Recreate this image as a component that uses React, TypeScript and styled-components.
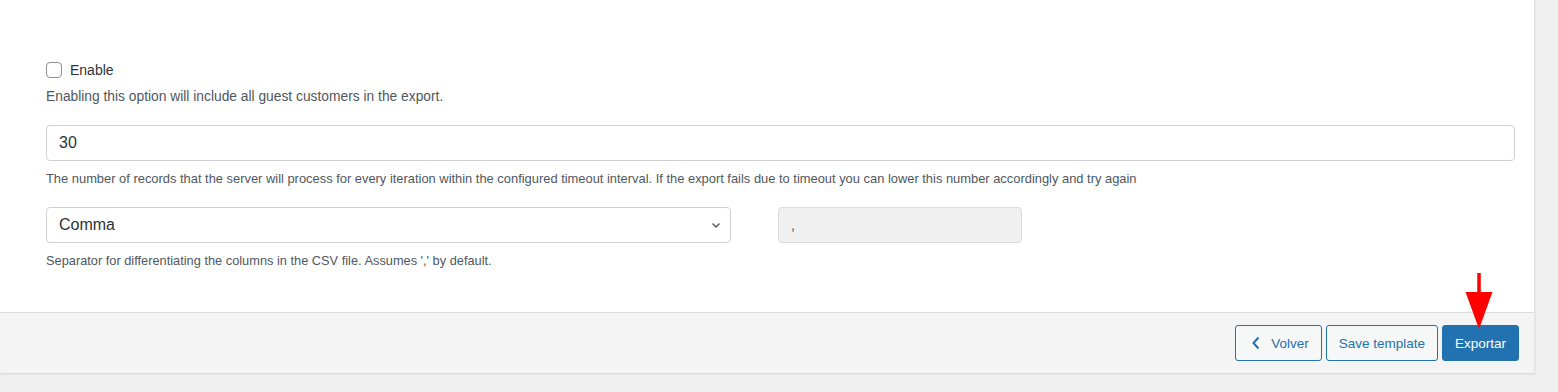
import React from "react";
import styled, { createGlobalStyle } from "styled-components";

const GlobalStyle = createGlobalStyle`
  html, body {
    margin: 0;
    padding: 0;
    background: #f0f0f1;
    font-family: "Liberation Sans", Arial, sans-serif;
    color: #1d2327;
  }
`;

const Page = styled.div`
  width: 1558px;
  height: 392px;
  overflow: hidden;
  background: #f0f0f1;
`;

const Panel = styled.section`
  width: 1534px;
  background: #fff;
  border-right: 1px solid #e2e2e2;
  box-shadow: 0 1px 2px rgba(0, 0, 0, 0.12);
  display: flex;
  flex-direction: column;
`;

const Body = styled.div`
  height: 312px;
  padding: 62px 19px 0 46px;
  box-sizing: border-box;
  display: flex;
  flex-direction: column;
`;

const CheckRow = styled.label`
  display: flex;
  align-items: center;
  gap: 8px;
  font-size: 14px;
  color: #2c3338;
  height: 16px;
`;

const Box = styled.span`
  width: 14px;
  height: 14px;
  border: 1px solid #8c8f94;
  border-radius: 4px;
  background: #fff;
`;

const Hint = styled.p<{ $gap: number; $size: number }>`
  margin: ${(p) => p.$gap}px 0 0;
  font-size: ${(p) => p.$size}px;
  line-height: 16px;
  color: #50575e;
`;

const Field = styled.div<{ $gap: number; $width: number; $disabled?: boolean }>`
  margin-top: ${(p) => p.$gap}px;
  width: ${(p) => p.$width}px;
  height: 36px;
  box-sizing: border-box;
  border: 1px solid ${(p) => (p.$disabled ? "#dcdcde" : "#d0d0d0")};
  border-radius: 4px;
  background: ${(p) => (p.$disabled ? "#f0f0f1" : "#fff")};
  display: flex;
  align-items: center;
  justify-content: space-between;
  padding: 0 8px 0 12px;
  font-size: ${(p) => (p.$disabled ? 14 : 16)}px;
  color: ${(p) => (p.$disabled ? "#50575e" : "#2c3338")};
`;

const SelectRow = styled.div`
  display: flex;
  gap: 47px;
  margin-top: 20px;
`;

const Chevron = () => (
  <svg width="12" height="12" viewBox="0 0 12 12" fill="none">
    <path d="M2.5 4.5 6 8l3.5-3.5" stroke="#50575e" strokeWidth="1.4" />
  </svg>
);

const Footer = styled.div`
  height: 60px;
  background: #f4f4f4;
  border-top: 1px solid #dcdcde;
  display: flex;
  justify-content: flex-end;
  align-items: center;
  gap: 4px;
  padding-right: 15px;
`;

const Button = styled.button<{ $primary?: boolean }>`
  position: relative;
  height: 36px;
  box-sizing: border-box;
  padding: 0 12px;
  border-radius: 3px;
  border: 1px solid #2271b1;
  background: ${(p) => (p.$primary ? "#2271b1" : "#f6f7f7")};
  color: ${(p) => (p.$primary ? "#fff" : "#2271b1")};
  font-family: inherit;
  font-size: 13.5px;
  display: flex;
  align-items: center;
  gap: 10px;
`;

const BackButton = styled(Button)`
  padding: 0 12px 0 15px;
`;

const Arrow = styled.svg`
  position: absolute;
  left: 21px;
  top: -53px;
`;

export default function App() {
  return (
    <Page>
      <GlobalStyle />
      <Panel>
        <Body>
          <CheckRow>
            <Box />
            Enable
          </CheckRow>
          <Hint $gap={11} $size={13.8}>
            Enabling this option will include all guest customers in the export.
          </Hint>
          <Field $gap={20} $width={1469}>30</Field>
          <Hint $gap={10} $size={12.9}>
            The number of records that the server will process for every iteration within the
            configured timeout interval. If the export fails due to timeout you can lower this
            number accordingly and try again
          </Hint>
          <SelectRow>
            <Field $gap={0} $width={685}>
              Comma
              <Chevron />
            </Field>
            <Field $gap={0} $width={244} $disabled>
              ,
            </Field>
          </SelectRow>
          <Hint $gap={10} $size={12.8}>
            Separator for differentiating the columns in the CSV file. Assumes ',' by default.
          </Hint>
        </Body>
        <Footer>
          <BackButton>
            <svg width="10" height="14" viewBox="0 0 10 14" fill="none">
              <path d="M7.5 1.5 2.5 7l5 5.5" stroke="#2271b1" strokeWidth="2" />
            </svg>
            Volver
          </BackButton>
          <Button>Save template</Button>
          <Button $primary>
            Exportar
            <Arrow width="30" height="58" viewBox="0 0 30 58">
              <path d="M15 0 V22" stroke="#ff0000" strokeWidth="3.5" />
              <path d="M1.5 19 H28.5 L15 56 Z" fill="#ff0000" />
            </Arrow>
          </Button>
        </Footer>
      </Panel>
    </Page>
  );
}
